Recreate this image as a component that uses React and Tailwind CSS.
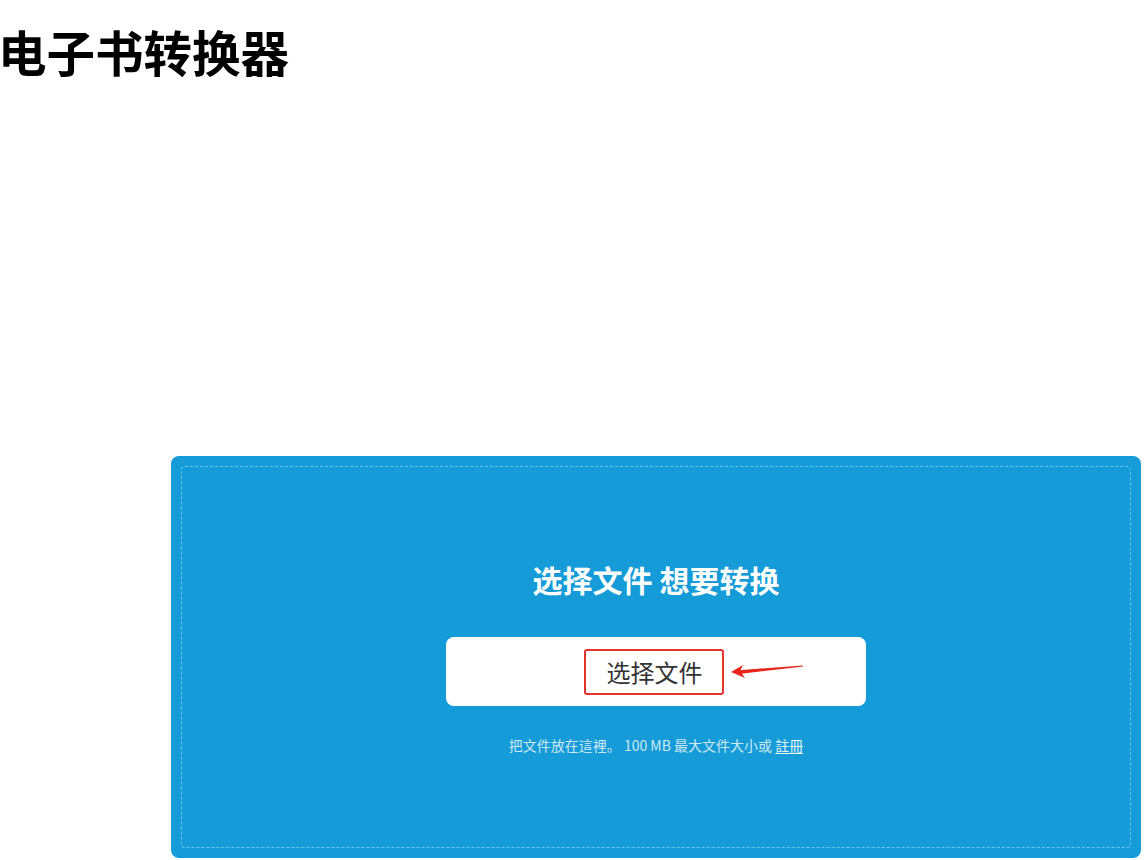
import React from "react";

const font = { fontFamily: '"Noto Sans CJK SC", "Noto Sans", sans-serif' };

export default function App() {
  return (
    <div className="min-h-[860px] w-[1148px] bg-white" style={font}>
      <h1 className="mt-[27px] mb-0 -ml-[2px] text-[48.5px] leading-[48px] font-bold text-black">
        电子书转换器
      </h1>
      <div className="mt-[381px] pl-[171px] pr-[7px]">
        <div className="h-[402px] rounded-lg bg-[#159cd8] p-[10px]">
          <div className="flex h-full flex-col items-center rounded border border-dashed border-[#6cc4ec] pt-[98px]">
            <h2 className="m-0 text-[30px] leading-[29px] font-bold text-white">
              选择文件 想要转换
            </h2>
            <div className="relative mt-[43px] flex h-[69px] w-[420px] items-center rounded-lg bg-white pl-[138px]">
              <div className="flex h-[46px] w-[140px] items-center justify-center rounded-[3px] border-2 border-[#e3332b] pl-[1px]">
                <span className="text-[24px] leading-[24px] text-[#333333]">选择文件</span>
              </div>
              <svg
                className="absolute left-[282px] top-[24px]"
                width="80"
                height="20"
                viewBox="0 0 80 20"
              >
                <polygon points="3,11 15,4 12,10 17,17" fill="#e8231c" />
                <polygon points="11,9.2 75,4.4 75,5.6 11,13" fill="#e8231c" />
              </svg>
            </div>
            <p className="mt-[29px] text-[14px] leading-[20px] text-[#cfe8f6]">
              把文件放在這裡。 100 MB 最大文件大小或{" "}
              <span className="text-[#eaf6fc] underline underline-offset-2">註冊</span>
            </p>
          </div>
        </div>
      </div>
    </div>
  );
}
